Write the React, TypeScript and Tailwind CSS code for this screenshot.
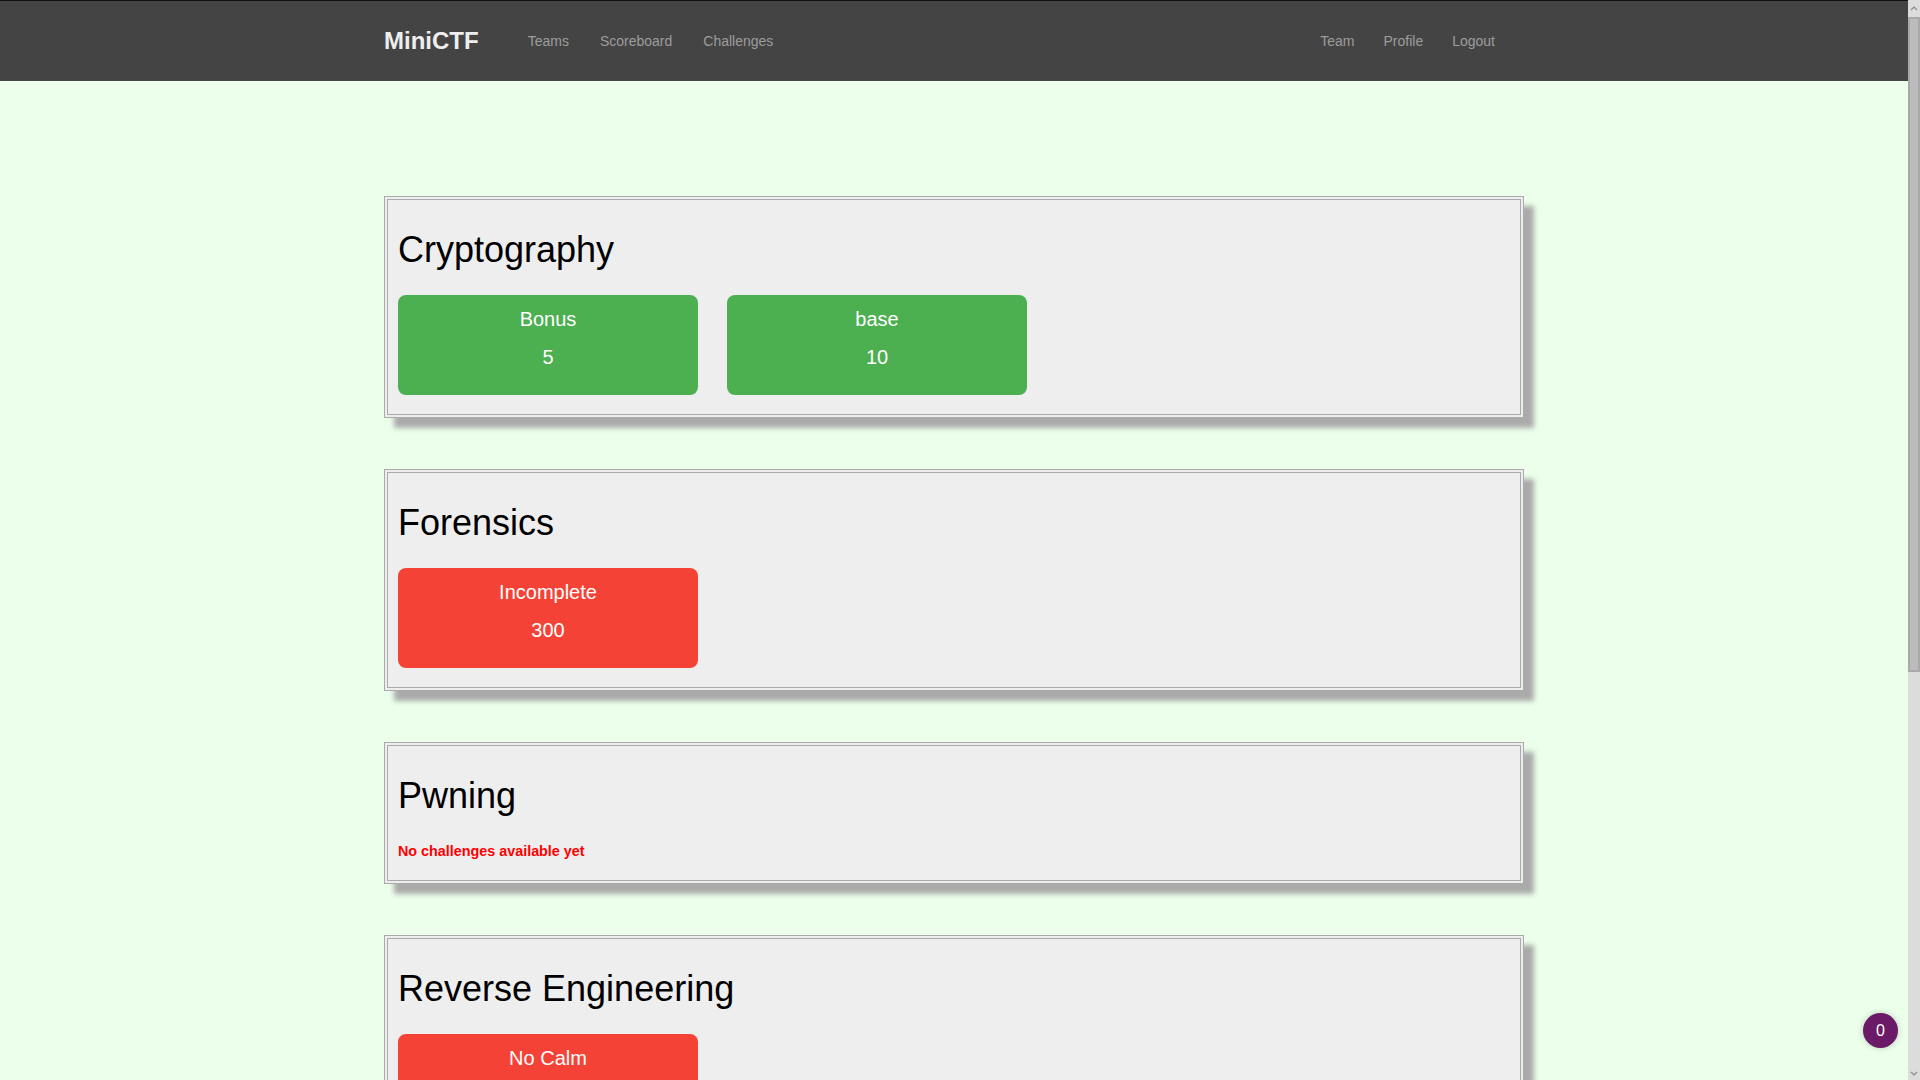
import React from "react";

type Chal = { name: string; points: number; solved: boolean };
type Cat = { title: string; items: Chal[] };

const cats: Cat[] = [
  {
    title: "Cryptography",
    items: [
      { name: "Bonus", points: 5, solved: true },
      { name: "base", points: 10, solved: true },
    ],
  },
  { title: "Forensics", items: [{ name: "Incomplete", points: 300, solved: false }] },
  { title: "Pwning", items: [] },
  { title: "Reverse Engineering", items: [{ name: "No Calm", points: 100, solved: false }] },
];

function Card({ c }: { c: Chal }) {
  return (
    <div
      className={`w-[300px] h-[100px] rounded-[8px] pt-[10px] text-center text-white text-[20px] ${
        c.solved ? "bg-[#4caf50]" : "bg-[#f44336]"
      }`}
    >
      <div className="leading-[28px]">{c.name}</div>
      <div className="leading-[28px] mt-[10px]">{c.points}</div>
    </div>
  );
}

function Panel({ cat }: { cat: Cat }) {
  return (
    <div className="w-[1140px] mb-[51.5px] bg-[#eeeeee] border-[4px] border-double border-[#aaaaaa] shadow-[10px_10px_5px_#aaaaaa] px-[10px] pt-[10px] pb-[10px]">
      <h1 className="mt-[20px] mb-[10px] text-[36px] leading-[39.6px] font-normal text-black">{cat.title}</h1>
      <div className="pt-[15px] pb-[9px]">
        {cat.items.length === 0 ? (
          <p className="text-[14.35px] leading-[20px] font-bold text-[#ff0000]">No challenges available yet</p>
        ) : (
          <div className="flex gap-[29px]">
            {cat.items.map((c) => (
              <Card key={c.name} c={c} />
            ))}
          </div>
        )}
      </div>
    </div>
  );
}

export default function App() {
  return (
    <div
      className="h-[1080px] w-full overflow-hidden flex"
      style={{ fontFamily: '"Liberation Sans", Arial, sans-serif' }}
    >
      <div className="flex-1 relative overflow-hidden bg-[#ebffeb]">
        <nav className="h-[81px] bg-[#444444] border-t border-[#111111]">
          <div className="w-[1140px] mx-auto h-full flex items-center">
            <div className="text-[24px] leading-[28px] font-bold text-[#eeeeee]">MiniCTF</div>
            <div className="ml-[49px] flex gap-[31px] text-[14px] leading-[20px] text-[#9d9d9d]">
              <span>Teams</span>
              <span>Scoreboard</span>
              <span>Challenges</span>
            </div>
            <div className="ml-auto mr-[29px] flex gap-[29px] text-[14px] leading-[20px] text-[#9d9d9d]">
              <span>Team</span>
              <span>Profile</span>
              <span>Logout</span>
            </div>
          </div>
        </nav>
        <div className="w-[1140px] mx-auto pt-[115px]">
          {cats.map((c) => (
            <Panel key={c.title} cat={c} />
          ))}
        </div>
        <div className="absolute right-[10px] bottom-[32px] w-[35px] h-[35px] rounded-full bg-[#6a1a66] shadow-[0_0_6px_rgba(0,0,0,0.2)] flex items-center justify-center text-white text-[16px]">
          0
        </div>
      </div>
      <div className="w-[12px] h-full bg-[#dcdcdc] flex flex-col">
        <div className="h-[17px] flex items-center justify-center">
          <svg width="8" height="5" viewBox="0 0 8 5">
            <path d="M1 4 L4 1 L7 4" stroke="#8a8a8a" strokeWidth="1.2" fill="none" />
          </svg>
        </div>
        <div className="h-[655px] border-[2px] border-[#a9a9a9] bg-[#bcbcbc]" />
        <div className="flex-1" />
        <div className="h-[14px] flex items-center justify-center">
          <svg width="8" height="5" viewBox="0 0 8 5">
            <path d="M1 1 L4 4 L7 1" stroke="#8a8a8a" strokeWidth="1.2" fill="none" />
          </svg>
        </div>
      </div>
    </div>
  );
}
